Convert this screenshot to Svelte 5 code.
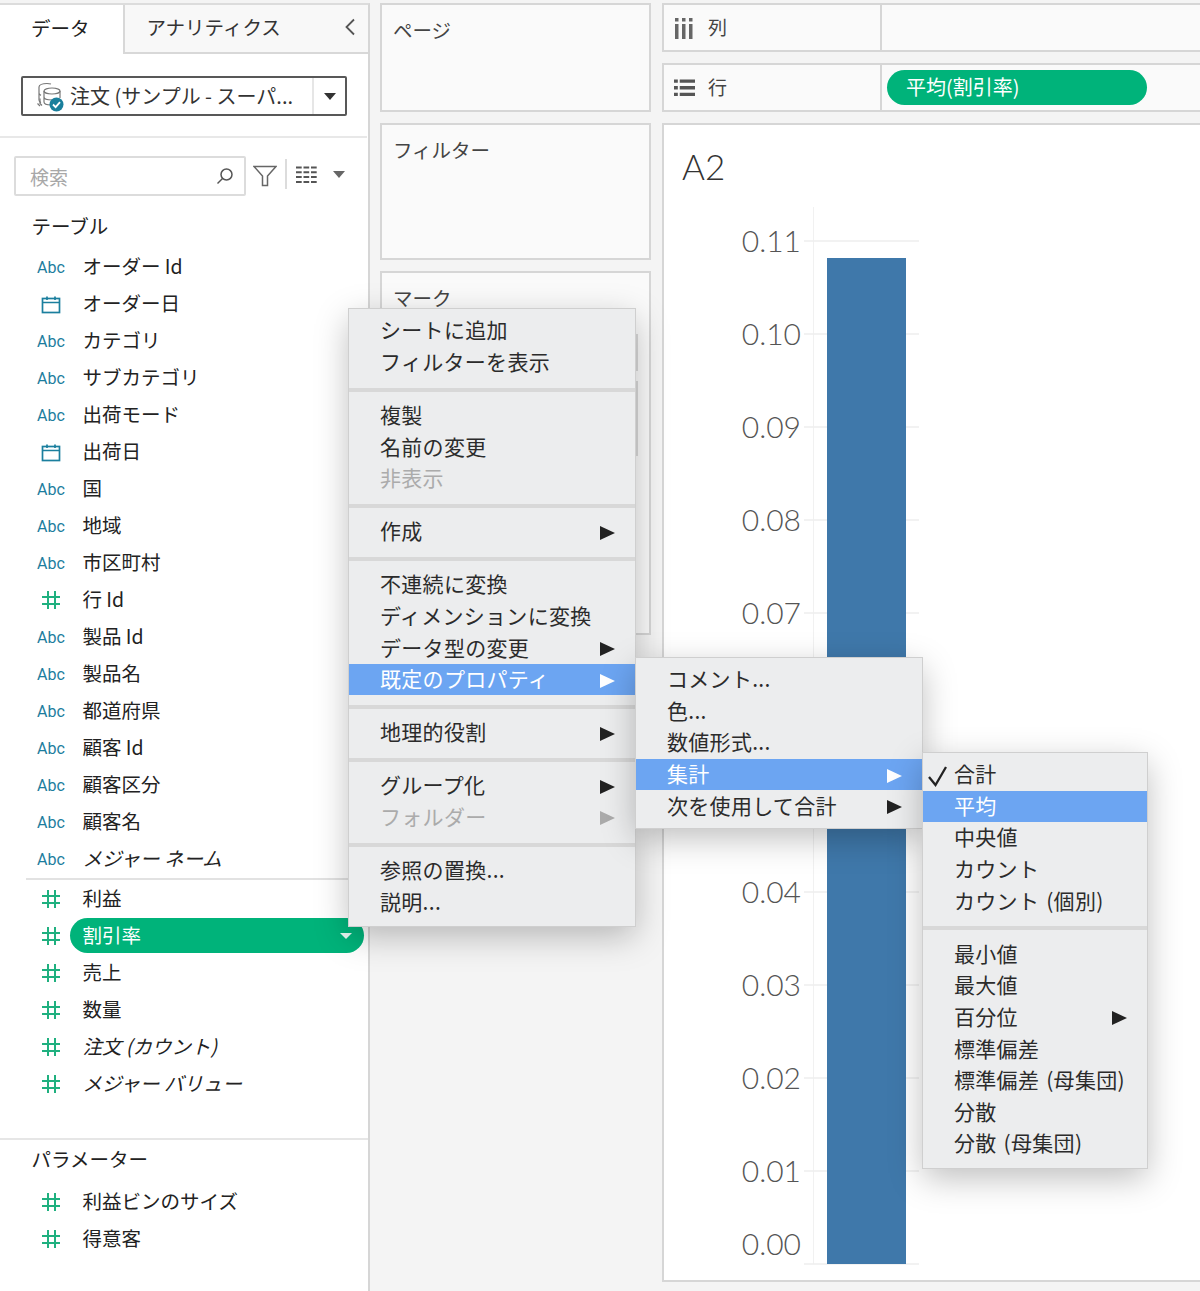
<script>
  const dims = [
    ['abc','オーダー Id'],['cal','オーダー日'],['abc','カテゴリ'],['abc','サブカテゴリ'],['abc','出荷モード'],['cal','出荷日'],
    ['abc','国'],['abc','地域'],['abc','市区町村'],['num','行 Id'],['abc','製品 Id'],['abc','製品名'],['abc','都道府県'],
    ['abc','顧客 Id'],['abc','顧客区分'],['abc','顧客名'],['abc','メジャー ネーム','it']
  ];
  const meas = [
    ['num','利益'],['num','割引率','pill'],['num','売上'],['num','数量'],['num','注文 (カウント)','it'],['num','メジャー バリュー','it']
  ];
  const params = [['num','利益ビンのサイズ'],['num','得意客']];

  const I = (t, o = {}) => ({ t, ...o });
  const menu1 = [
    [I('シートに追加'), I('フィルターを表示')],
    [I('複製'), I('名前の変更'), I('非表示', { off: 1 })],
    [I('作成', { sub: 1 })],
    [I('不連続に変換'), I('ディメンションに変換'), I('データ型の変更', { sub: 1 }), I('既定のプロパティ', { sub: 1, on: 1 })],
    [I('地理的役割', { sub: 1 })],
    [I('グループ化', { sub: 1 }), I('フォルダー', { sub: 1, off: 1 })],
    [I('参照の置換...'), I('説明...')]
  ];
  const menu2 = [[I('コメント...'), I('色...'), I('数値形式...'), I('集計', { sub: 1, on: 1 }), I('次を使用して合計', { sub: 1 })]];
  const menu3 = [
    [I('合計', { check: 1 }), I('平均', { on: 1 }), I('中央値'), I('カウント'), I('カウント (個別)')],
    [I('最小値'), I('最大値'), I('百分位', { sub: 1 }), I('標準偏差'), I('標準偏差 (母集団)'), I('分散'), I('分散 (母集団)')]
  ];
  const menus = [
    { cls: 'm1', groups: menu1 },
    { cls: 'm2', groups: menu2 },
    { cls: 'm3', groups: menu3 }
  ];
  const ticks = [0.11,0.10,0.09,0.08,0.07,0.06,0.05,0.04,0.03,0.02,0.01,0.00];
  const shown = ticks.filter((v) => v !== 0.06 && v !== 0.05);
  const tickY = (v) => 1264 - v * 9300;
</script>

{#snippet row(r)}
  <div class="row">
    <span class="ic">
      {#if r[0] === 'abc'}
        <span class="abc">Abc</span>
      {:else if r[0] === 'cal'}
        <svg class="calico" width="20" height="18" viewBox="0 0 20 18" fill="none" stroke="#1b7f9e" stroke-width="1.7">
          <rect x="1.500" y="2.500" width="17" height="14" />
          <path d="M1.500 6.500h17M6 0.500v3.500M14 0.500v3.500" />
        </svg>
      {:else}
        <svg class="numico" width="20" height="20" viewBox="0 0 20 20" fill="none" stroke="#1fb07f" stroke-width="2">
          <path d="M7 1v18M14 1v18M1 7h18M1 14h18" />
        </svg>
      {/if}
    </span>
    <span class="name {r[2] ?? ''}">{r[1]}
      {#if r[2] === 'pill'}<i class="pcaret"></i>{/if}
    </span>
  </div>
{/snippet}

<div class="page">
  <aside class="side">
    <div class="tabs">
      <div class="tab active">データ</div>
      <div class="tab other">アナリティクス
        <svg class="chev" width="12" height="18" viewBox="0 0 12 18" fill="none" stroke="#555" stroke-width="1.8"><path d="M10 1.500 2.500 9l7.500 7.500" /></svg>
      </div>
    </div>
    <div class="source">
      <div class="combo">
        <svg class="dsicon" width="30" height="30" viewBox="0 0 30 30" fill="none" stroke="#777" stroke-width="1.2">
          <path d="M4 5c0-2 3.500-3.500 8-3.500 1.500 0 3 .2 4 .5M4 5v13c0 1 .8 2 2 2.600M4 11c0 1 .8 1.800 2 2.400" />
          <ellipse cx="17" cy="9" rx="8" ry="3" />
          <path d="M9 9v11c0 1.700 3 3 7 3M25 9v7M9 15c0 1.700 3.500 3 8 3 3 0 5.500-.6 7-1.500" />
          <path d="M5 16.500v5l2 2M2.500 21.500l2.500 2.500" />
          <circle cx="21.500" cy="22.500" r="7" fill="#1a7f9c" stroke="none" />
          <path d="M18 22.500l2.600 2.600 4.400-5" stroke="#fff" stroke-width="1.800" />
        </svg>
        <span class="ctext">注文 (サンプル - スーパ...</span>
        <span class="cbtn"><i class="caret dark"></i></span>
      </div>
    </div>
    <div class="searchrow">
      <div class="search">
        <span>検索</span>
        <svg width="18" height="18" viewBox="0 0 18 18" fill="none" stroke="#555" stroke-width="1.500"><circle cx="10.500" cy="7.500" r="5.500" /><path d="M6.500 11.500 1.500 16.500" /></svg>
      </div>
      <svg class="funnel" width="24" height="22" viewBox="0 0 24 22" fill="none" stroke="#666" stroke-width="1.500"><path d="M1 1.500h22l-8.500 9.500v9.500h-5v-9.500z" /></svg>
      <span class="vsep"></span>
      <svg class="grid" width="21" height="18" viewBox="0 0 21 18" fill="none" stroke="#555" stroke-width="2">
        <path d="M0 1.500h21M0 6.200h21M0 11h21M0 16h21" stroke-dasharray="5.700 1.800" />
      </svg>
      <i class="caret gray"></i>
    </div>
    <div class="head">テーブル</div>
    {#each dims as r}{@render row(r)}{/each}
    <div class="div1"></div>
    {#each meas as r}{@render row(r)}{/each}
    <div class="div2"></div>
    <div class="head">パラメーター</div>
    {#each params as r}{@render row(r)}{/each}
  </aside>

  <section class="mid">
    <div class="card c1">ページ</div>
    <div class="card c2">フィルター</div>
    <div class="card c3">
      マーク
      <div class="mk a"></div>
      <div class="mk b"></div>
    </div>
  </section>

  <main class="right">
    <div class="shelf">
      <div class="slabel">
        <span class="sic"><svg width="20" height="22" viewBox="0 0 20 22" fill="#666"><path d="M1 7h3.500v15H1zM8 7h3.500v15H8zM15 7h3.500v15H15zM1 1h3.500v3.500H1zM8 1h3.500v3.500H8zM15 1h3.500v3.500H15z" /></svg></span>
        <span class="stx">列</span>
      </div>
    </div>
    <div class="shelf">
      <div class="slabel">
        <span class="sic"><svg width="21" height="18" viewBox="0 0 22 18" fill="#555"><path d="M0 0h4v3.500H0zM6 0h16v3.500H6zM0 7h4v3.500H0zM6 7h16v3.500H6zM0 14h4v3.500H0zM6 14h16v3.500H6z" /></svg></span>
        <span class="stx">行</span>
      </div>
      <div class="spill">平均(割引率)</div>
    </div>
    <div class="chart">
      <svg width="538" height="1155" viewBox="664 125 538 1155">
        <text class="title" x="682" y="180">A2</text>
        <path d="M813.500 207V1264" stroke="#f1f1f1" stroke-width="1" />
        {#each ticks as v}
          <path d="M804 {tickY(v)}H919" stroke="#eeeeee" stroke-width="1.500" />
        {/each}
        <rect x="827" y="258" width="79" height="1006" fill="#3f78aa" />
        {#each shown as v}
          <text class="lab" x="801" y={(v === 0 ? 1244 : tickY(v)) + 10.500}>{v.toFixed(2)}</text>
        {/each}
      </svg>
    </div>
  </main>

  {#each menus as m}
    <div class="menu {m.cls}">
      {#each m.groups as g, gi}
        {#if gi > 0}<div class="msep"></div>{/if}
        <div class="mgroup">
          {#each g as it}
            <div class="mi" class:on={it.on} class:off={it.off}>
              {#if it.check}
                <svg class="check" width="22" height="22" viewBox="0 0 22 22" fill="none" stroke="#222" stroke-width="2.300"><path d="M2 12l6.500 8L19 2" /></svg>
              {/if}
              <span class="mt">{it.t}</span>
              {#if it.sub}<i class="tri"></i>{/if}
            </div>
          {/each}
        </div>
      {/each}
    </div>
  {/each}
</div>

<style>
  :global(body) { margin: 0; background: #f4f4f4; }
  .page {
    position: relative;
    width: 1200px;
    height: 1291px;
    overflow: hidden;
    background: #f4f4f4;
    display: flex;
    align-items: flex-start;
    padding-top: 3px;
    box-sizing: border-box;
    font-family: "Noto Sans CJK JP", "Noto Sans", sans-serif;
    color: #333;
  }

  .side {
    width: 370px;
    height: 1288px;
    flex: none;
    box-sizing: border-box;
    background: #fff;
    border-top: 2px solid #dcdcdc;
    border-right: 2px solid #d6d6d6;
    font-size: 19.500px;
  }
  .tabs { display: flex; height: 49px; }
  .tab { display: flex; align-items: center; box-sizing: border-box; height: 49px; line-height: 1; padding-bottom: 3px; }
  .active { width: 123px; padding-left: 31px; color: #222; }
  .other {
    flex: 1;
    padding-left: 21.500px;
    background: #f8f8f8;
    border-left: 2px solid #d8d8d8;
    border-bottom: 2px solid #d8d8d8;
    position: relative;
    justify-content: space-between;
    padding-right: 12px;
  }
  .source { height: 84px; box-sizing: border-box; padding: 22px 0 0 21px; border-bottom: 2px solid #e8e8e8; margin-right: 1px; }
  .combo {
    width: 326px;
    height: 40px;
    box-sizing: border-box;
    border: 2px solid #585858;
    border-radius: 2px;
    display: flex;
    align-items: center;
    padding-left: 12px;
  }
  .dsicon { flex: none; margin-top: 1px; }
  .ctext { font-size: 20px; margin-left: 5px; flex: 1; white-space: nowrap; color: #333; line-height: 1; }
  .cbtn { width: 31px; height: 36px; border-left: 2px solid #e6e6e6; display: flex; align-items: center; justify-content: center; }
  .caret { display: block; width: 0; height: 0; border-left: 6.500px solid transparent; border-right: 6.500px solid transparent; }
  .caret.dark { border-top: 7px solid #333; }
  .caret.gray { border-top: 7px solid #666; margin-left: 16px; margin-top: -3px; }
  .searchrow { display: flex; align-items: center; height: 40px; margin-top: 18px; padding-left: 14px; }
  .search {
    width: 232px;
    height: 40px;
    box-sizing: border-box;
    border: 2px solid #dcdcdc;
    border-radius: 2px;
    display: flex;
    align-items: center;
    justify-content: space-between;
    padding: 0 10px 0 14px;
    color: #a8a8a8;
    line-height: 1;
    font-size: 19px;
  }
  .funnel { margin-left: 7px; }
  .vsep { width: 2px; height: 30px; background: #dcdcdc; margin-left: 8px; margin-top: -4px; }
  .grid { margin-left: 9px; margin-top: -3px; }
  .head { height: 37px; line-height: 37px; margin: 10.500px 0 4px; padding-left: 31.500px; color: #222; }
  .row { display: flex; align-items: center; height: 37px; padding-left: 37px; }
  .ic { width: 45.500px; flex: none; display: flex; align-items: center; }
  .ic svg { margin-left: 5px; }
  .ic .numico { margin-top: 2px; margin-left: 4px; }
  .ic .calico { margin-top: 4px; margin-left: 4px; }
  .abc { font: 16px "Roboto", "Liberation Sans", sans-serif; color: #1c7d9e; margin-top: 3px; }
  .name { color: #222; line-height: 37px; white-space: nowrap; margin-top: -2px; }
  .name.it { font-style: italic; }
  .name.pill {
    position: relative;
    margin-top: 0;
    margin-left: -12.500px;
    padding-left: 12.500px;
    width: 294px;
    height: 35px;
    line-height: 33px;
    box-sizing: border-box;
    background: #00b37a;
    color: #fff;
    border-radius: 18px;
  }
  .pcaret { position: absolute; right: 12px; top: 15px; width: 0; height: 0; border-left: 6px solid transparent; border-right: 6px solid transparent; border-top: 6px solid #e8f8f2; }
  .div1 { height: 2px; margin: 1px 0 0 26px; background: #e2e2e2; }
  .div2 { height: 2px; margin-top: 36px; background: #e6e6e6; }
  .div2 + .head { margin: 0 0 6px; }

  .mid { width: 271px; margin-left: 10px; margin-right: 1px; flex: none; display: flex; flex-direction: column; gap: 11px; }
  .card {
    box-sizing: border-box;
    background: #fafafa;
    border: 2px solid #d6d6d6;
    padding: 13px 11px;
    font-size: 19.500px;
    line-height: 24px;
    color: #444;
    position: relative;
  }
  .c1 { height: 109px; }
  .c2 { height: 137px; }
  .c3 { height: 364px; }
  .mk { width: 250px; box-sizing: border-box; border: 2px solid #d9d9d9; background: #f4f4f4; position: absolute; left: 6px; }
  .mk.a { top: 61px; height: 37px; }
  .mk.b { top: 108px; height: 75px; }

  .right { width: 540px; margin-left: 10px; flex: none; display: flex; flex-direction: column; gap: 11px; }
  .shelf {
    height: 49px;
    box-sizing: border-box;
    background: #fafafa;
    border: 2px solid #d6d6d6;
    display: flex;
    align-items: center;
    font-size: 19px;
    color: #444;
  }
  .slabel { width: 218px; height: 100%; box-sizing: border-box; border-right: 2px solid #d6d6d6; display: flex; align-items: center; padding-left: 10px; line-height: 1; flex: none; }
  .sic { width: 34px; flex: none; display: flex; align-items: center; }
  .stx { margin-top: -2px; }
  .spill {
    margin-left: 5px;
    width: 260px;
    height: 35px;
    line-height: 33px;
    box-sizing: border-box;
    padding-left: 19px;
    background: #00b37a;
    color: #fff;
    border-radius: 18px;
    font-size: 20px;
  }
  .chart { height: 1159px; box-sizing: border-box; background: #fff; border: 2px solid #d6d6d6; }
  .chart svg { display: block; }
  .title { font: 300 35px "Lato", "Open Sans", sans-serif; fill: #333; }
  .lab { font: 300 30px "Lato", "Open Sans", sans-serif; fill: #555; text-anchor: end; }

  .menu {
    position: absolute;
    box-sizing: border-box;
    background: #ecedee;
    box-shadow: 0 0 0 1px #cfcfcf, 0 10px 32px rgba(0, 0, 0, 0.26);
    font-size: 21px;
    letter-spacing: 0.3px;
    word-spacing: 2px;
  }
  .m1 { left: 349px; top: 309px; width: 286px; }
  .m2 { left: 636px; top: 658px; width: 286px; }
  .m3 { left: 923px; top: 753px; width: 224px; }
  .mgroup { padding: 8px 0 9.500px; }
  .mgroup:first-child { padding-top: 6px; }
  .mgroup:last-child { padding-bottom: 8px; }
  .m2 .mgroup { padding: 6px 0; }
  .msep { height: 4px; background: #d8d8d8; }
  .mi {
    height: 31.600px;
    line-height: 31px;
    padding: 0 20px 0 31px;
    display: flex;
    align-items: center;
    justify-content: space-between;
    position: relative;
    color: #2b2b2b;
    white-space: nowrap;
  }
  .mt { margin-top: -2px; }
  .mi.on { background: #6ca5f2; color: #fff; }
  .mi.off { color: #ababab; }
  .tri { display: block; width: 0; height: 0; margin-top: 2px; border-top: 7px solid transparent; border-bottom: 7px solid transparent; border-left: 15px solid #222; }
  .on .tri { border-left-color: #fff; }
  .off .tri { border-left-color: #ababab; }
  .check { position: absolute; left: 4px; top: 6px; }
</style>
